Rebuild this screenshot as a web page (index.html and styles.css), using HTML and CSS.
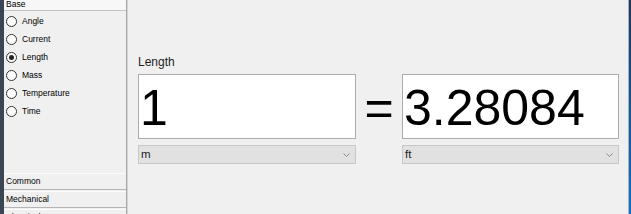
FILE: index.html
```html
<!DOCTYPE html>
<html lang="en">
<head>
    <meta charset="UTF-8">
    <meta name="viewport" content="width=device-width, initial-scale=1.0">
    <title>Unit Converter</title>
    <link rel="stylesheet" href="styles.css">
</head>
<body>
    <div class="window">
        <!-- Категории слева -->
        <div class="sidebar">
            <div class="group-header">Base</div>
            <div class="group-list">
                <label class="radio"><span class="dot"></span>Angle</label>
                <label class="radio"><span class="dot"></span>Current</label>
                <label class="radio checked"><span class="dot"></span>Length</label>
                <label class="radio"><span class="dot"></span>Mass</label>
                <label class="radio"><span class="dot"></span>Temperature</label>
                <label class="radio"><span class="dot"></span>Time</label>
            </div>
            <div class="group-btn">Common</div>
            <div class="group-btn">Mechanical</div>
            <div class="group-btn">Electrical</div>
        </div>

        <!-- Конвертер -->
        <div class="main">
            <div class="quantity">Length</div>
            <div class="converter">
                <div class="field">1</div>
                <div class="equals">=</div>
                <div class="field">3.28084</div>
                <div class="combo">m
                    <svg class="chevron" width="7" height="4" viewBox="0 0 7 4"><path d="M0.5 0.5 L3.5 3.5 L6.5 0.5" fill="none" stroke="#8a8a8a" stroke-width="1"/></svg>
                </div>
                <div></div>
                <div class="combo">ft
                    <svg class="chevron" width="7" height="4" viewBox="0 0 7 4"><path d="M0.5 0.5 L3.5 3.5 L6.5 0.5" fill="none" stroke="#8a8a8a" stroke-width="1"/></svg>
                </div>
            </div>
        </div>

        <div class="edge"></div>
    </div>
</body>
</html>
```

FILE: styles.css
```css
/* Основные стили */
body {
    margin: 0;
    background-color: #f0f0f0;
    font-family: "Liberation Sans", Arial, sans-serif;
    color: #000;
}
.window {
    display: flex;
    align-items: flex-start;
    height: 214px;
    overflow: hidden;
}

/* Боковая панель */
.sidebar {
    width: 122px;
    height: 240px;
    border-left: 4px solid #3a4653;
    border-right: 1px solid #a8a8a8;
    box-shadow: 1px 0 0 #d4d4d4;
    display: flex;
    flex-direction: column;
    font-size: 8.5px;
}
.group-header {
    height: 11px;
    line-height: 9px;
    padding-left: 2px;
    background: #f7f7f7;
    border-bottom: 1px solid #c4c4c4;
    box-sizing: border-box;
}
.group-list {
    height: 162px;
    padding-top: 1px;
    box-sizing: border-box;
}
.radio {
    display: flex;
    align-items: center;
    height: 18px;
    padding-left: 2px;
}
.dot {
    width: 9px;
    height: 9px;
    border: 1px solid #333;
    border-radius: 50%;
    background: #fff;
    margin-right: 5px;
    position: relative;
}
.radio.checked .dot::after {
    content: "";
    position: absolute;
    left: 2px;
    top: 2px;
    width: 5px;
    height: 5px;
    border-radius: 50%;
    background: #222;
}
.group-btn {
    height: 17px;
    line-height: 15px;
    padding-left: 2px;
    margin-bottom: 1px;
    background: #f0f0f0;
    border-top: 1px solid #fcfcfc;
    border-bottom: 1px solid #b4b4b4;
    box-sizing: border-box;
    flex-shrink: 0;
}

/* Основная область */
.main {
    flex: 1;
    padding: 55px 0 0 11px;
}
.quantity {
    font-size: 12px;
    line-height: 14px;
    margin-bottom: 5px;
    color: #1e1e1e;
}
.converter {
    display: grid;
    grid-template-columns: 218px 46px 217px;
    row-gap: 6px;
    align-items: baseline;
}
.field {
    height: 65px;
    box-sizing: border-box;
    border: 1px solid #acacac;
    background: #fff;
    font-size: 50px;
    padding: 5px 0 0 1px;
    line-height: 57px;
}
.equals {
    font-size: 50px;
    text-align: center;
    line-height: 57px;
}
.combo {
    height: 19px;
    box-sizing: border-box;
    border: 1px solid #c8c8c8;
    background: #e1e1e1;
    font-size: 11.5px;
    line-height: 17px;
    padding-left: 2px;
    display: flex;
    justify-content: space-between;
    align-items: center;
    color: #222;
}
.chevron {
    margin-right: 5px;
}

/* Край соседнего окна */
.edge {
    align-self: stretch;
    width: 2px;
    border-left: 1px solid #b0b0b0;
    background: linear-gradient(#1b3660, #0b5fae 60%, #0a73cf);
}
```
